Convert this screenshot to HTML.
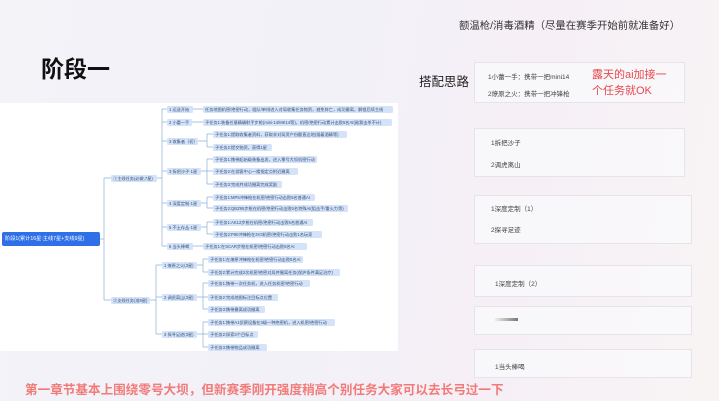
<!DOCTYPE html>
<html><head><meta charset="utf-8"><style>
*{margin:0;padding:0;box-sizing:border-box}
body{width:719px;height:401px;overflow:hidden;position:relative;font-family:"Liberation Sans","Noto Sans CJK SC",sans-serif;background:linear-gradient(100deg,#f3f3f8 0%,#f2f1f8 40%,#f6f0f6 70%,#f8f4f4 100%)}
.a{position:absolute;white-space:nowrap}
.map{position:absolute;left:0;top:103px;width:398px;height:248px;background:#fff}
.n{position:absolute;height:7px;line-height:7px;font-size:4.2px;color:#34507a;background:#d5e3f8;border-radius:1.5px;padding:0 2px;overflow:hidden;white-space:nowrap}
.box{position:absolute;border:1px solid #e6e3ea;background:rgba(250,249,252,.7)}
.s{font-size:6.5px;color:#444}
</style></head><body>
<div class="a" style="left:459px;top:17px;font-size:10.4px;color:#333">额温枪/消毒酒精（尽量在赛季开始前就准备好）</div>
<div class="a" style="left:41px;top:50px;font-size:23px;font-weight:bold;color:#111">阶段一</div>
<div class="a" style="left:419px;top:71px;font-size:12.5px;color:#222">搭配思路</div>

<div class="box" style="left:474px;top:62px;width:211px;height:41px"></div>
<div class="a s" style="left:488px;top:71px">1小蕾一手：携带一把mini14</div>
<div class="a s" style="left:488px;top:88px">2燎原之火：携带一把冲锋枪</div>
<div class="a" style="left:592px;top:67px;font-size:11px;color:#e5484d;line-height:16px">露天的ai加接一<br>个任务就OK</div>

<div class="box" style="left:474px;top:128px;width:211px;height:49px"></div>
<div class="a s" style="left:491px;top:137px">1拆把沙子</div>
<div class="a s" style="left:491px;top:159px">2调虎离山</div>

<div class="box" style="left:474px;top:195px;width:218px;height:49px"></div>
<div class="a s" style="left:491px;top:203px">1深度定制（1）</div>
<div class="a s" style="left:491px;top:224px">2探寻足迹</div>

<div class="box" style="left:474px;top:265px;width:218px;height:32px"></div>
<div class="a s" style="left:495px;top:278px">1深度定制（2）</div>
<div class="box" style="left:474px;top:306px;width:218px;height:29px"></div>
<div class="a" style="left:492px;top:318px;width:26px;height:3px;background:linear-gradient(90deg,#fff,#777)"></div>
<div class="box" style="left:474px;top:349px;width:218px;height:29px"></div>
<div class="a s" style="left:495px;top:361px">1当头棒喝</div>

<div class="a" style="left:25px;top:379px;font-size:12.6px;font-weight:bold;color:#f27a78">第一章节基本上围绕零号大坝，但新赛季刚开强度稍高个别任务大家可以去长弓过一下</div>

<div class="map"></div>
<svg class="a" style="left:0;top:0" width="400" height="360" fill="none" stroke="#8fb0d6" stroke-width="0.7">
<path d="M100 239H104M104 178V300M104 178H111M104 300H111"/>
<path d="M157 178H162M162 109V246M162 109H167M162 122H167M162 141H167M162 171H167M162 203H167M162 227H167M162 246H167"/>
<path d="M150 300H156M156 265V334M156 265H162M156 297H162M156 334H162"/>
<path d="M193 109H203M192 122H203M193 246H203"/>
<path d="M198 141H207M207 134V147M207 134H213M207 147H213"/>
<path d="M201 171H207M207 159V184M207 159H213M207 171H213M207 184H213"/>
<path d="M201 203H207M207 197V208M207 197H213M207 208H213"/>
<path d="M201 227H207M207 222V234M207 222H213M207 234H213"/>
<path d="M197 265H203M203 259V272M203 259H208M203 272H208"/>
<path d="M197 297H203M203 283V309M203 283H208M203 297H208M203 309H208"/>
<path d="M197 334H203M203 322V347M203 322H208M203 334H208M203 347H208"/>
</svg>
<div class="n" style="left:2px;top:232px;width:98px;height:14px;line-height:14px;background:#2f6fe8;color:#fff;font-size:5.2px;border-radius:2px;padding:0 3px">阶段1(累计16星:主线7星+支线9星)</div>
<div class="n" style="left:111px;top:175px;width:46px">①主线任务(必做,7星)</div>
<div class="n" style="left:111px;top:297px;width:39px">②支线任务(准9星)</div>

<div class="n" style="left:167px;top:106px;width:26px">1 运送开始</div>
<div class="n" style="left:167px;top:119px;width:25px">2 小蕾一手</div>
<div class="n" style="left:167px;top:138px;width:31px">3 收集者（初）</div>
<div class="n" style="left:167px;top:168px;width:34px">3 拆把沙子·1星</div>
<div class="n" style="left:167px;top:200px;width:34px">4 深度定制·1星</div>
<div class="n" style="left:167px;top:224px;width:34px">5 不土存丛·1星</div>
<div class="n" style="left:167px;top:243px;width:26px">6 当头棒喝</div>
<div class="n" style="left:162px;top:262px;width:35px">1 燎原之火(3星)</div>
<div class="n" style="left:162px;top:294px;width:35px">2 调虎离山(3星)</div>
<div class="n" style="left:162px;top:331px;width:35px">3 探寻足迹(3星)</div>

<div class="n" style="left:203px;top:106px;width:190px">任务地图机密/绝密行动，组队/单排进入对局收集任务物资，避免阵亡，成功撤离，解锁后续主线</div>
<div class="n" style="left:203px;top:119px;width:189px">子任务1:装备任意精确射手步枪(mini-14/MK14等)，机密/绝密行动累计击败5名AI(敌我击杀不计)</div>
<div class="n" style="left:213px;top:131px;width:134px">子任务1:提取收集者资料，获取非对局资产份额直达地(插着酒精等)</div>
<div class="n" style="left:213px;top:144px;width:59px">子任务2:提交物资，获得1星</div>
<div class="n" style="left:213px;top:156px;width:104px">子任务1:携带起始级装备出发，进入零号大坝机密行动</div>
<div class="n" style="left:213px;top:168px;width:85px">子任务2:在游客中心一楼指定点附近撤离</div>
<div class="n" style="left:213px;top:181px;width:69px">子任务3:完成并成功撤离完成奖励</div>
<div class="n" style="left:213px;top:194px;width:102px">子任务1:MP5冲锋枪在机密/绝密行动击败5名普通AI</div>
<div class="n" style="left:213px;top:205px;width:135px">子任务2:QBZ95步枪在机密/绝密行动击败5名特殊AI(狙击手/重火力等)</div>
<div class="n" style="left:213px;top:219px;width:100px">子任务1:AK12步枪在机密/绝密行动击败5名普通AI</div>
<div class="n" style="left:213px;top:231px;width:109px">子任务2:P90冲锋枪在3V3机密/绝密行动击败1名玩家</div>
<div class="n" style="left:203px;top:243px;width:104px">子任务1:在SCAR步枪在机密/绝密行动击败5名AI</div>
<div class="n" style="left:208px;top:256px;width:95px">子任务1:在燎原冲锋枪在机密/绝密行动击败5名AI</div>
<div class="n" style="left:208px;top:269px;width:132px">子任务2:累计完成3次机密/绝密对局并撤离任务(保护条件满足治疗)</div>
<div class="n" style="left:208px;top:280px;width:102px">子任务1:携带一次任务机，进入任务机密/绝密行动</div>
<div class="n" style="left:208px;top:294px;width:70px">子任务2:完成地图标注目标点位置</div>
<div class="n" style="left:208px;top:306px;width:57px">子任务3:携带撤离成功撤离</div>
<div class="n" style="left:208px;top:319px;width:127px">子任务1:携带A1侦察设备在3级一种绝密机，进入机密/绝密行动</div>
<div class="n" style="left:208px;top:331px;width:50px">子任务2:探索3个目标点</div>
<div class="n" style="left:208px;top:344px;width:59px">子任务3:携带物品成功撤离</div>
</body></html>
